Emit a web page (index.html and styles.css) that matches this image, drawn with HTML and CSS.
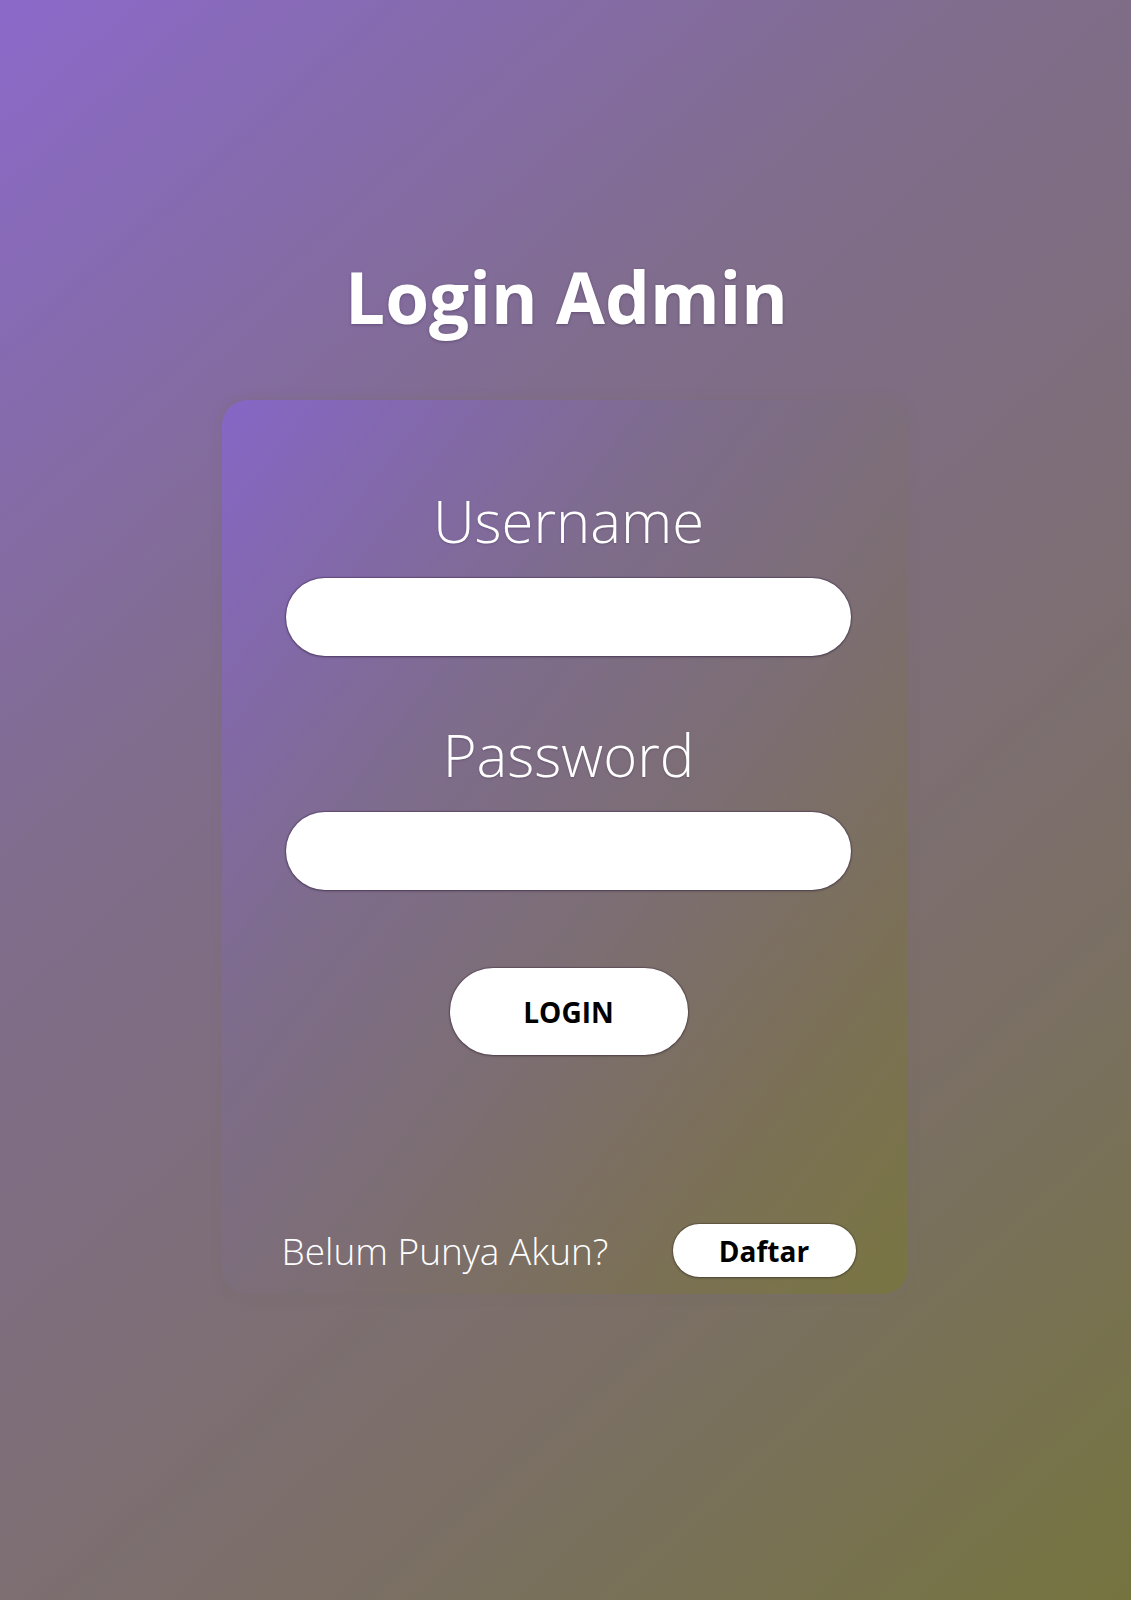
FILE: index.html
```html
<!DOCTYPE html>
<html lang="id">
<head>
<meta charset="utf-8">
<title>Login Admin</title>
<link rel="stylesheet" href="styles.css">
</head>
<body>
<main class="page">
  <h1 class="title">Login Admin</h1>
  <form class="card">
    <label class="field-label" for="username">Username</label>
    <input class="field-input" id="username" type="text">
    <label class="field-label field-label--second" for="password">Password</label>
    <input class="field-input" id="password" type="password">
    <button class="login-btn" type="button">LOGIN</button>
    <div class="signup-row">
      <span class="signup-text">Belum Punya Akun?</span>
      <button class="signup-btn" type="button">Daftar</button>
    </div>
  </form>
</main>
</body>
</html>
```

FILE: styles.css
```css
html, body {
  margin: 0;
  padding: 0;
}

body {
  min-height: 1600px;
  font-family: "Open Sans", "Noto Sans", sans-serif;
  background: linear-gradient(138deg, #8b69ca 0%, #806d8e 33%, #7e6e7c 52%, #7b6f66 72%, #75743f 100%);
  color: #ffffff;
}

.page {
  display: flex;
  flex-direction: column;
  align-items: center;
  padding-top: 261px;
  padding-left: 2px;
}

.title {
  margin: 0;
  font-size: 71px;
  line-height: 71px;
  font-weight: 700;
  color: #ffffff;
  text-shadow: 0 1px 3px rgba(40, 20, 60, 0.35);
}

.card {
  margin-top: 68px;
  width: 686px;
  box-sizing: border-box;
  padding: 92px 52px 17px 60px;
  border-radius: 26px;
  background: linear-gradient(to bottom right, #8666c6 0%, #7e6c8c 35%, #7c6e72 58%, #7b7058 78%, #797542 100%);
  box-shadow: 0 0 8px 2px rgba(120, 108, 110, 0.35);
  display: flex;
  flex-direction: column;
  align-items: center;
  margin-left: -4px;
}

.field-label {
  font-size: 58px;
  line-height: 58px;
  font-weight: 300;
  color: #ffffff;
  text-shadow: 0 1px 2px rgba(40, 20, 60, 0.25);
}

.field-label--second {
  margin-top: 70px;
}

.field-input {
  margin-top: 28px;
  width: 565px;
  height: 78px;
  box-sizing: border-box;
  border: none;
  border-radius: 39px;
  background: #ffffff;
  box-shadow: 0 0 1px 1px rgba(60, 40, 80, 0.45), 0 1px 3px rgba(0, 0, 0, 0.25);
  outline: none;
  padding: 0 30px;
  font-size: 24px;
  font-family: "Open Sans", sans-serif;
}

.login-btn {
  margin-top: 78px;
  width: 238px;
  height: 87px;
  border: none;
  border-radius: 44px;
  background: #ffffff;
  box-shadow: 0 0 1px 1px rgba(60, 40, 60, 0.4), 0 1px 3px rgba(0, 0, 0, 0.25);
  font-family: "Open Sans", sans-serif;
  font-size: 28px;
  font-weight: 700;
  color: #000000;
  padding: 0;
}

.signup-row {
  margin-top: 169px;
  width: 574px;
  display: flex;
  align-items: center;
  justify-content: space-between;
}

.signup-text {
  font-size: 37px;
  line-height: 53px;
  font-weight: 300;
  color: #ffffff;
}

.signup-btn {
  width: 183px;
  height: 53px;
  border: none;
  border-radius: 27px;
  background: #ffffff;
  box-shadow: 0 0 1px 1px rgba(60, 50, 40, 0.4), 0 1px 3px rgba(0, 0, 0, 0.25);
  font-family: "Open Sans", sans-serif;
  font-size: 28px;
  font-weight: 700;
  color: #000000;
  padding: 0;
}
```
